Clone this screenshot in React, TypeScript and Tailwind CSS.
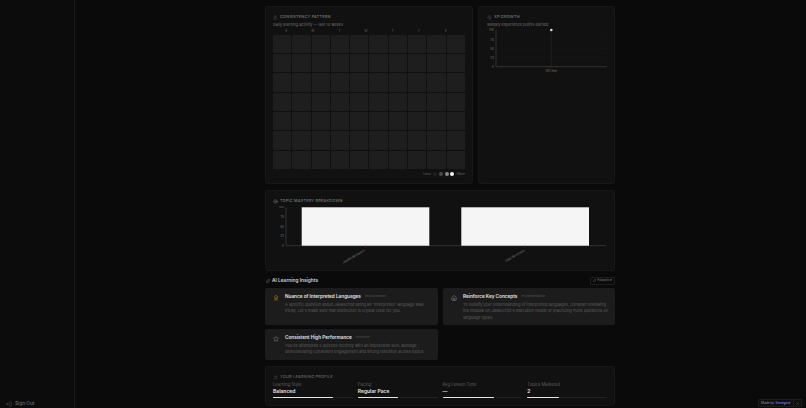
import { Flame, Zap, Target, Sparkles, Star, Award, Home, User, X, LogOut } from "lucide-react";

const days = ["S", "M", "T", "W", "T", "F", "S"];
const cells = Array.from({ length: 70 });

const insights = [
  {
    title: "Nuance of Interpreted Languages",
    tag: "misconception",
    body: "A specific question about JavaScript being an 'interpreted' language was tricky. Let's make sure that distinction is crystal clear for you.",
    icon: "award",
    h: "h-[37px]",
  },
  {
    title: "Reinforce Key Concepts",
    tag: "recommendation",
    body: "To solidify your understanding of interpreted languages, consider reviewing the module on JavaScript's execution model or practicing more questions on language types.",
    icon: "home",
    h: "h-[37px]",
  },
  {
    title: "Consistent High Performance",
    tag: "milestone",
    body: "You've attempted 5 quizzes recently with an impressive 96% average, demonstrating consistent engagement and strong retention across topics.",
    icon: "star",
    h: "h-[31px]",
  },
];

const profile = [
  { label: "Learning Style", value: "Balanced", pct: "w-[75%]" },
  { label: "Pacing", value: "Regular Pace", pct: "w-[50%]" },
  { label: "Avg Lesson Time", value: "—", pct: "w-[65%]" },
  { label: "Topics Mastered", value: "2", pct: "w-[40%]" },
];

function XpChart() {
  return (
    <svg viewBox="0 0 125 50" className="block h-[50px] w-[125px]">
      {[2, 11.2, 20.3, 29.5].map((y) => (
        <line key={y} x1="9" x2="120" y1={y} y2={y} stroke="#1d1d1d" strokeWidth="0.5" strokeDasharray="1 1" />
      ))}
      <line x1="119.7" x2="119.7" y1="2" y2="38.7" stroke="#1d1d1d" strokeWidth="0.5" strokeDasharray="1 1" />
      <line x1="64.3" x2="64.3" y1="2" y2="38.7" stroke="#2a2a2a" strokeWidth="0.5" />
      <line x1="9" x2="9" y1="2" y2="38.7" stroke="#3a3a3a" strokeWidth="0.8" />
      <line x1="9" x2="120" y1="38.7" y2="38.7" stroke="#3a3a3a" strokeWidth="0.8" />
      {["100", "75", "50", "25", "0"].map((t, i) => (
        <text key={t} x="7" y={i * 9.2 + 3.4} textAnchor="end" fontSize="3" fill="#777">{t}</text>
      ))}
      <text x="64.3" y="43.5" textAnchor="middle" fontSize="3" fill="#777">W3 Sep</text>
      <circle cx="64.3" cy="2" r="1.3" fill="#d4d4d4" />
    </svg>
  );
}

function TopicChart() {
  return (
    <svg viewBox="0 0 334 62" className="block h-[62px] w-[334px]">
      <line x1="13" x2="13" y1="1.3" y2="39.7" stroke="#3a3a3a" strokeWidth="0.8" />
      <line x1="13" x2="333" y1="39.7" y2="39.7" stroke="#3a3a3a" strokeWidth="0.8" />
      {["100", "75", "50", "25", "0"].map((t, i) => (
        <text key={t} x="11" y={i * 9.6 + 2.4} textAnchor="end" fontSize="3" fill="#777">{t}</text>
      ))}
      <rect x="28.7" y="1.3" width="127.6" height="38.4" fill="#f5f5f5" />
      <rect x="188.3" y="1.3" width="127.7" height="38.4" fill="#f5f5f5" />
      <line x1="92.5" x2="92.5" y1="39.7" y2="42" stroke="#3a3a3a" strokeWidth="0.5" />
      <line x1="252" x2="252" y1="39.7" y2="42" stroke="#3a3a3a" strokeWidth="0.5" />
      <text x="92" y="45" textAnchor="end" fontSize="3" fill="#888" transform="rotate(-30 92 45)">JavaScript Basics</text>
      <text x="252" y="45" textAnchor="end" fontSize="3" fill="#888" transform="rotate(-30 252 45)">Data Structures</text>
    </svg>
  );
}

function InsightIcon({ kind }: { kind: string }) {
  if (kind === "award") return <Award className="h-[6px] w-[6px] text-[#b8860b]" />;
  if (kind === "home") return <Home className="h-[6px] w-[6px] text-[#8a8a8a]" />;
  return <Star className="h-[6px] w-[6px] text-[#8a8a8a]" />;
}

export default function App() {
  return (
    <div className="flex h-[408px] w-[806px] overflow-hidden bg-[#0a0a0a] font-['Inter',sans-serif] text-white">
      <aside className="flex w-[75px] shrink-0 flex-col justify-end border-r border-[#191919] bg-[#0c0c0c] pl-[6px]">
        <div className="flex h-[9px] items-center gap-[3px] text-[4.8px] text-[#7a7a7a]">
          <LogOut className="h-[6px] w-[6px] rotate-180" strokeWidth={1.5} />
          Sign Out
        </div>
      </aside>

      <main className="relative flex-1 overflow-hidden">
        <div className="ml-[190px] flex w-[350px] flex-col pt-[6px]">
          <div className="flex gap-[5px]">
            <section className="h-[178px] w-[208px] rounded-[3px] border border-[#181818] bg-[#111111] px-[7px] pt-[7px]">
              <h3 className="flex items-center gap-[2px] text-[3.9px] font-medium leading-[6px] tracking-[0.2px] text-[#777]">
                <Flame className="h-[5px] w-[5px]" strokeWidth={1.5} /> CONSISTENCY PATTERN
              </h3>
              <p className="mt-[2px] text-[3.9px] leading-[6px] text-[#6f6f6f]">Daily learning activity — last 10 weeks</p>
              <div className="mt-[0.5px] grid grid-cols-7 pr-[6px] text-center text-[3px] leading-[5px] text-[#666]">
                {days.map((d, i) => <span key={i}>{d}</span>)}
              </div>
              <div className="mt-[1px] grid grid-cols-10 gap-[1px]">
                {cells.map((_, i) => (
                  <div key={i} className="h-[18.4px] rounded-[1px] bg-[#1e1e1e]" />
                ))}
              </div>
              <div className="mt-[2.5px] flex items-center justify-end gap-[1.6px] text-[3.4px] leading-[5px] text-[#666]">
                Less
                <span className="ml-[1px] h-[4px] w-[4px] rounded-full bg-[#1e1e1e]" />
                <span className="h-[4px] w-[4px] rounded-full bg-[#4a4a4a]" />
                <span className="h-[4px] w-[4px] rounded-full bg-[#8a8a8a]" />
                <span className="mr-[1px] h-[4px] w-[4px] rounded-full bg-[#f5f5f5]" />
                More
              </div>
            </section>

            <section className="h-[178px] w-[137px] rounded-[3px] border border-[#181818] bg-[#111111] px-[8px] pt-[7px]">
              <h3 className="flex items-center gap-[2px] text-[3.9px] font-medium leading-[6px] tracking-[0.2px] text-[#777]">
                <Zap className="h-[5px] w-[5px]" strokeWidth={1.5} /> XP GROWTH
              </h3>
              <p className="mt-[2px] text-[3.9px] leading-[6px] text-[#6f6f6f]">Weekly experience points earned</p>
              <div><XpChart /></div>
            </section>
          </div>

          <section className="mt-[6px] h-[81px] rounded-[3px] border border-[#181818] bg-[#111111] px-[7px] pt-[7px]">
            <h3 className="flex items-center gap-[2px] text-[3.9px] font-medium leading-[6px] tracking-[0.2px] text-[#777]">
              <Target className="h-[5px] w-[5px]" strokeWidth={1.5} /> TOPIC MASTERY BREAKDOWN
            </h3>
            <div className="mt-[2px]"><TopicChart /></div>
          </section>

          <div className="mt-[6px] flex h-[8px] items-center justify-between">
            <h2 className="flex items-center gap-[2px] pl-[1px] text-[4.8px] font-semibold text-[#d4d4d4]">
              <Sparkles className="h-[4px] w-[4px] text-[#777]" /> AI Learning Insights
            </h2>
            <span className="flex items-center gap-[1px] rounded-[1px] border border-[#1d1d1d] px-[2px] text-[3.6px] text-[#777]">
              <Sparkles className="h-[3px] w-[3px]" /> Adaptive
            </span>
          </div>

          <div className="mt-[3px] grid grid-cols-[173px_172px] gap-x-[5px] gap-y-[4px]">
            {insights.map((it) => (
              <div key={it.title} className={`flex gap-[6px] rounded-[2px] bg-[#1c1c1c] pl-[8px] pr-[6px] pt-[5px] ${it.h}`}>
                <span className="mt-[2px] flex h-[6px] w-[6px] shrink-0 items-center justify-center">
                  <InsightIcon kind={it.icon} />
                </span>
                <div className="min-w-0">
                  <div className="flex items-center gap-[4px] leading-[7px]">
                    <span className="whitespace-nowrap text-[4.7px] font-semibold text-[#e5e5e5]">{it.title}</span>
                    <span className="text-[3px] text-[#555]">{it.tag}</span>
                  </div>
                  <p className="mt-[1.5px] text-[4px] leading-[6.6px] text-[#5f5f5f]">{it.body}</p>
                </div>
              </div>
            ))}
          </div>

          <section className="mt-[6px] h-[40px] rounded-[3px] border border-[#181818] bg-[#111111] px-[7px] pt-[7px]">
            <h3 className="flex items-center gap-[2px] text-[3.9px] font-medium leading-[6px] tracking-[0.2px] text-[#666]">
              <User className="h-[5px] w-[5px]" strokeWidth={1.5} /> YOUR LEARNING PROFILE
            </h3>
            <div className="mt-[2px] grid grid-cols-4 gap-[5px]">
              {profile.map((p) => (
                <div key={p.label}>
                  <div className="text-[4.2px] leading-[6px] text-[#5f5f5f]">{p.label}</div>
                  <div className="text-[5px] font-semibold leading-[7px] text-[#e5e5e5]">{p.value}</div>
                  <div className="mt-[2px] h-[1.3px] w-full rounded-full bg-[#222]">
                    <div className={`h-full rounded-full bg-[#e5e5e5] ${p.pct}`} />
                  </div>
                </div>
              ))}
            </div>
          </section>
        </div>

        <div className="absolute bottom-[1px] right-[4px] flex h-[8px] items-center gap-[1.5px] rounded-[1px] border border-[#1d1d1d] bg-[#0f0f0f] pl-[2px] text-[3.2px] text-[#999]">
          Made by <span className="font-semibold text-[#6d7cf0]">Emergent</span>
          <span className="ml-[1px] flex h-full items-center border-l border-[#1d1d1d] px-[2px]">
            <X className="h-[3px] w-[3px]" />
          </span>
        </div>
      </main>
    </div>
  );
}
